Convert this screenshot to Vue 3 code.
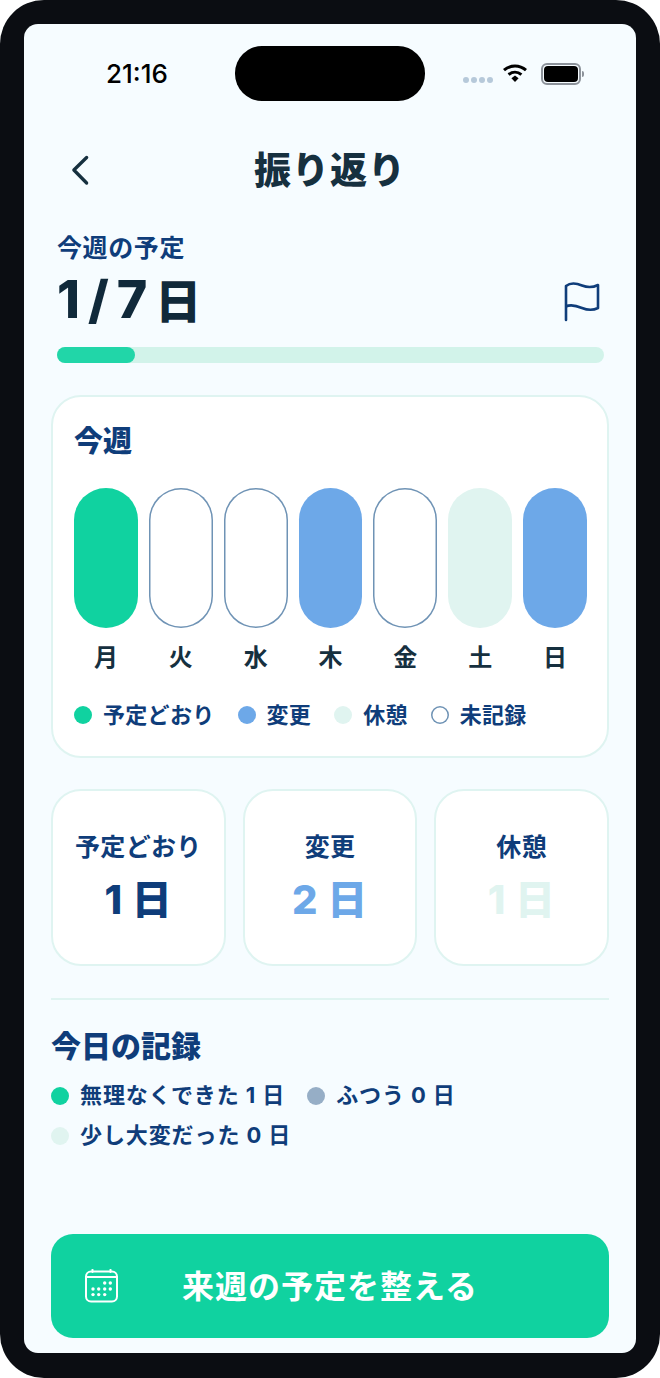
<template>
  <div class="phone">
    <div class="screen">
      <div class="status">
        <span class="time">21:16</span>
        <div class="island"></div>
        <div class="status-icons">
          <div class="signal"><i v-for="n in 4" :key="n"></i></div>
          <svg class="wifi" width="26" height="20" viewBox="0 0 26 20">
            <path d="M2 7.2C8.4 1.6 17.6 1.6 24 7.2" fill="none" stroke="#000" stroke-width="3" />
            <path d="M6.6 11.6C10.4 8.4 15.6 8.4 19.4 11.6" fill="none" stroke="#000" stroke-width="3" />
            <path d="M9.4 15.2L13 12.6L16.6 15.2L13 19Z" fill="#000" />
          </svg>
          <div class="battery"><span></span></div>
          <i class="battery-cap"></i>
        </div>
      </div>

      <header class="nav">
        <svg class="back" width="24" height="32" viewBox="0 0 24 32">
          <path d="M19 3.5L6 16L19 29" transform="translate(-1 0) scale(0.98 1)" fill="none" stroke="#16303f" stroke-width="3.4" stroke-linecap="round" stroke-linejoin="round" />
        </svg>
        <h1>振り返り</h1>
      </header>

      <section class="week-goal">
        <div class="goal-label">今週の予定</div>
        <div class="goal-row">
          <div class="goal-value">1/7<span>日</span></div>
          <svg class="flag" width="36" height="41" viewBox="0 0 36 41">
            <path d="M2 39V5C7 1 12 2 18 4.5C23 6.5 28 7 34 4V27C28 30 23 29 18 27C12 24.5 7 23 2 25.5" fill="none" stroke="#0f3d7a" stroke-width="2.6" stroke-linecap="round" stroke-linejoin="round" />
          </svg>
        </div>
        <div class="progress"><div class="progress-fill" :style="{ width: '14.3%' }"></div></div>
      </section>

      <section class="card">
        <h2>今週</h2>
        <div class="days">
          <div v-for="d in days" :key="d.label" class="day">
            <div class="pill" :class="d.state"></div>
            <span>{{ d.label }}</span>
          </div>
        </div>
        <div class="legend">
          <div v-for="l in legend" :key="l.label" class="legend-item">
            <i class="dot" :class="l.state"></i>
            <span>{{ l.label }}</span>
          </div>
        </div>
      </section>

      <section class="stats">
        <div v-for="s in stats" :key="s.label" class="stat">
          <div class="stat-label">{{ s.label }}</div>
          <div class="stat-value" :class="s.state">{{ s.value }}</div>
        </div>
      </section>

      <section class="today">
        <h2>今日の記録</h2>
        <div class="records">
          <div v-for="r in records" :key="r.label" class="record">
            <i class="dot big" :class="r.state"></i>
            <span>{{ r.label }}</span>
          </div>
        </div>
      </section>

      <button class="cta">
        <svg class="cal" width="34" height="34" viewBox="0 0 34 34">
          <rect x="1" y="2.5" width="31" height="30" rx="5" fill="none" stroke="#fff" stroke-width="2" />
          <path d="M1 8H32M7.5 0.8V3M25.5 0.8V3" fill="none" stroke="#fff" stroke-width="2" stroke-linecap="round" />
          <g fill="#fff">
            <circle v-for="p in calDots" :key="p[0] + '-' + p[1]" :cx="p[0]" :cy="p[1]" r="1.7" />
          </g>
        </svg>
        <span>来週の予定を整える</span>
      </button>
    </div>
  </div>
</template>

<script setup>
const days = [
  { label: '月', state: 'done' },
  { label: '火', state: 'empty' },
  { label: '水', state: 'empty' },
  { label: '木', state: 'changed' },
  { label: '金', state: 'empty' },
  { label: '土', state: 'rest' },
  { label: '日', state: 'changed' }
]

const legend = [
  { label: '予定どおり', state: 'done' },
  { label: '変更', state: 'changed' },
  { label: '休憩', state: 'rest' },
  { label: '未記録', state: 'empty' }
]

const stats = [
  { label: '予定どおり', value: '1 日', state: 'navy' },
  { label: '変更', value: '2 日', state: 'blue' },
  { label: '休憩', value: '1 日', state: 'pale' }
]

const records = [
  { label: '無理なくできた 1 日', state: 'done' },
  { label: 'ふつう 0 日', state: 'normal' },
  { label: '少し大変だった 0 日', state: 'rest' }
]

const calDots = [
  [19.7, 14], [25.3, 14],
  [8, 20], [13.7, 20], [19.7, 20], [25.3, 20],
  [8, 25.6], [13.7, 25.6], [19.7, 25.6]
]
</script>

<style>
body {
  background: #fff;
}
</style>

<style scoped>
.phone {
  width: 660px;
  height: 1378px;
  box-sizing: border-box;
  padding: 24px;
  background: #0b0d12;
  border-radius: 44px;
  font-family: Inter, "Noto Sans CJK JP", sans-serif;
}

.screen {
  height: 1329px;
  box-sizing: border-box;
  background: #f6fcff;
  border-radius: 14px;
  padding: 22px 27px 15px;
  display: flex;
  flex-direction: column;
}

.status {
  display: grid;
  grid-template-columns: 184px 190px 1fr;
  height: 55px;
  align-items: center;
}

.time {
  padding-left: 55px;
  font-size: 26px;
  font-weight: 500;
  color: #000;
}

.island {
  height: 55px;
  background: #000;
  border-radius: 27px;
}

.status-icons {
  display: flex;
  align-items: center;
  padding-left: 38px;
}

.signal {
  display: flex;
  gap: 2px;
  margin-top: 12px;
  margin-right: 9px;
}

.signal i {
  width: 6px;
  height: 6px;
  border-radius: 50%;
  background: #b6c9da;
}

.wifi {
  margin-right: 13px;
  margin-top: -1px;
}

.battery {
  width: 34px;
  height: 16px;
  border: 2px solid #8c929a;
  border-radius: 6px;
  padding: 1px;
  background: #f6fcff;
}

.battery span {
  display: block;
  height: 100%;
  background: #000;
  border-radius: 4px;
}

.battery-cap {
  width: 2px;
  height: 6px;
  background: #8c929a;
  border-radius: 0 2px 2px 0;
  margin-left: 1px;
}

.nav {
  position: relative;
  margin-top: 43px;
  height: 54px;
  display: flex;
  align-items: center;
  justify-content: center;
}

.nav h1 {
  margin: 0;
  font-size: 37px;
  font-weight: 800;
  color: #16303f;
  line-height: 54px;
  letter-spacing: 1px;
}

.back {
  position: absolute;
  left: 18px;
  top: 10px;
}

.week-goal {
  margin-top: 32px;
  padding: 0 5px 0 6px;
}

.goal-label {
  font-size: 25px;
  line-height: 36px;
  font-weight: 700;
  color: #0f3d7a;
  letter-spacing: 0.6px;
}

.goal-row {
  display: flex;
  justify-content: space-between;
  align-items: center;
  height: 68px;
}

.goal-value {
  font-size: 52px;
  line-height: 66px;
  font-weight: 800;
  color: #10293a;
  letter-spacing: 8px;
}

.goal-value span {
  font-size: 46px;
  letter-spacing: 0;
}

.flag {
  margin-top: 3px;
  margin-right: 4px;
}

.progress {
  margin-top: 13px;
  height: 16px;
  border-radius: 8px;
  background: #d2f3ea;
}

.progress-fill {
  height: 100%;
  border-radius: 8px;
  background: #21d6a8;
}

.card {
  margin-top: 32px;
  height: 363px;
  box-sizing: border-box;
  background: #fff;
  border: 2px solid #dff4f1;
  border-radius: 30px;
  padding: 26px 20px 0 21px;
}

.card h2 {
  margin: 0;
  font-size: 29px;
  line-height: 38px;
  font-weight: 800;
  color: #0f3d7a;
}

.days {
  margin-top: 27px;
  display: grid;
  grid-template-columns: repeat(7, 1fr);
  gap: 11px;
}

.day {
  display: flex;
  flex-direction: column;
  align-items: center;
}

.day span {
  margin-top: 13px;
  font-size: 24px;
  line-height: 34px;
  font-weight: 700;
  color: #16303f;
}

.pill {
  width: 100%;
  height: 140px;
  box-sizing: border-box;
  border-radius: 32px;
}

.legend {
  margin-top: 24px;
  display: flex;
  align-items: center;
  gap: 23px;
}

.legend-item {
  display: flex;
  align-items: center;
  gap: 11px;
  font-size: 22px;
  line-height: 32px;
  font-weight: 700;
  color: #0f3d7a;
  letter-spacing: 0.3px;
}

.dot {
  width: 18px;
  height: 18px;
  box-sizing: border-box;
  border-radius: 50%;
  flex: none;
}

.done {
  background: #10d2a0;
}

.changed {
  background: #6da8e8;
}

.rest {
  background: #e0f4f0;
}

.normal {
  background: #96aec6;
}

.empty {
  background: #fff;
  box-shadow: inset 0 0 0 1.5px #6f93b5;
}

.stats {
  margin-top: 31px;
  display: grid;
  grid-template-columns: repeat(3, 1fr);
  gap: 17px;
}

.stat {
  height: 177px;
  box-sizing: border-box;
  background: #fff;
  border: 2px solid #dff4f1;
  border-radius: 30px;
  padding-top: 38px;
  text-align: center;
}

.stat-label {
  font-size: 25px;
  line-height: 36px;
  font-weight: 700;
  color: #0f3d7a;
  letter-spacing: 0.3px;
}

.stat-value {
  margin-top: 6px;
  font-size: 40px;
  line-height: 58px;
  font-weight: 800;
  letter-spacing: 0.5px;
}

.navy {
  color: #0f3d7a;
}

.blue {
  color: #6da8e8;
}

.pale {
  color: #e0f4f0;
}

.today {
  margin-top: 32px;
  border-top: 2px solid #dff4f1;
  padding-top: 25px;
}

.today h2 {
  margin: 0;
  font-size: 30px;
  line-height: 42px;
  font-weight: 800;
  color: #0f3d7a;
}

.records {
  margin-top: 13px;
  display: flex;
  flex-wrap: wrap;
  column-gap: 22px;
  row-gap: 9px;
  width: 480px;
}

.record {
  display: flex;
  align-items: center;
  gap: 11px;
  font-size: 22px;
  line-height: 31px;
  font-weight: 700;
  color: #0f3d7a;
  letter-spacing: 0.9px;
}

.cta {
  margin-top: auto;
  position: relative;
  height: 104px;
  border: none;
  border-radius: 22px;
  background: #10d2a0;
  color: #fff;
  font-family: inherit;
  font-size: 32px;
  font-weight: 700;
  letter-spacing: 1px;
  line-height: 103px;
  display: flex;
  align-items: flex-start;
  justify-content: center;
  flex: none;
}

.cal {
  position: absolute;
  left: 34px;
  top: 35px;
}
</style>
